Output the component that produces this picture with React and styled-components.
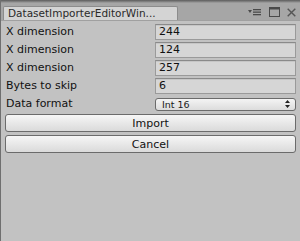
import React from "react";
import styled, { createGlobalStyle } from "styled-components";

const Global = createGlobalStyle`
  html, body {
    margin: 0;
    padding: 0;
    background: #c2c2c2;
  }
`;

const rows = [
  { label: "X dimension", value: "244" },
  { label: "X dimension", value: "124" },
  { label: "X dimension", value: "257" },
  { label: "Bytes to skip", value: "6" },
];

const App = () => (
  <>
    <Global />
    <Window>
      <TitleBar>
        <Tab>DatasetImporterEditorWin...</Tab>
        <Controls>
          <svg width="14" height="8" viewBox="0 0 14 8">
            <path d="M0 2 L4 2 L2 5 Z" fill="#4a4a4a" />
            <rect x="5" y="1" width="8" height="1.3" fill="#4a4a4a" />
            <rect x="5" y="3.5" width="8" height="1.3" fill="#4a4a4a" />
            <rect x="5" y="6" width="8" height="1.3" fill="#4a4a4a" />
          </svg>
          <svg width="11" height="10" viewBox="0 0 11 10">
            <rect x="0.5" y="0.5" width="10" height="9" fill="none" stroke="#4a4a4a" />
            <rect x="0.5" y="0.5" width="10" height="2" fill="#4a4a4a" />
          </svg>
          <svg width="9" height="9" viewBox="0 0 9 9">
            <path d="M0.7 0.7 L8.3 8.3 M8.3 0.7 L0.7 8.3" stroke="#555" strokeWidth="1.4" />
          </svg>
        </Controls>
      </TitleBar>
      <Body>
        <Fields>
          {rows.map((r, i) => (
            <Row key={i}>
              <Label>{r.label}</Label>
              <Field>{r.value}</Field>
            </Row>
          ))}
          <Row>
            <Label>Data format</Label>
            <Popup>
              <span>Int 16</span>
              <svg width="5" height="8" viewBox="0 0 5 8">
                <path d="M0 3 L2.5 0 L5 3 Z M0 5 L2.5 8 L5 5 Z" fill="#222" />
              </svg>
            </Popup>
          </Row>
        </Fields>
        <Buttons>
          <Button>Import</Button>
          <Button>Cancel</Button>
        </Buttons>
      </Body>
    </Window>
  </>
);

export default App;

const Window = styled.div`
  width: 300px;
  height: 241px;
  box-sizing: border-box;
  display: flex;
  flex-direction: column;
  font-family: "DejaVu Sans", "Liberation Sans", sans-serif;
  font-size: 11px;
  color: #111;
  background: #c2c2c2;
  border-left: 1px solid #6f6f6f;
  overflow: hidden;
`;

const TitleBar = styled.div`
  height: 21px;
  display: flex;
  align-items: flex-end;
  justify-content: space-between;
  background: linear-gradient(#5c5c5c 0, #8a8a8a 2px, #a6a6a6 3px, #a6a6a6);
  padding: 0 4px 0 2px;
  box-sizing: border-box;
  border-bottom: 1px solid #a0a0a0;
`;

const Tab = styled.div`
  width: 175px;
  height: 14px;
  box-sizing: border-box;
  background: #d4d4d4;
  border: 1px solid #8c8c8c;
  border-bottom: none;
  border-radius: 2px 2px 0 0;
  padding: 0 0 0 4px;
  font-size: 10.5px;
  line-height: 13px;
  color: #2a2a2a;
  white-space: nowrap;
  overflow: hidden;
`;

const Controls = styled.div`
  align-self: flex-start;
  margin-top: 7px;
  display: flex;
  align-items: center;
  gap: 7px;
`;

const Body = styled.div`
  display: flex;
  flex-direction: column;
  padding: 2px 4px 0 4px;
`;

const Fields = styled.div`
  display: flex;
  flex-direction: column;
  gap: 2px;
`;

const Row = styled.div`
  display: grid;
  grid-template-columns: 150px 1fr;
  align-items: center;
  height: 16px;
`;

const Label = styled.div`
  padding-left: 1px;
  line-height: 17px;
  white-space: nowrap;
`;

const Field = styled.div`
  height: 16px;
  box-sizing: border-box;
  background: #d6d6d6;
  border: 1px solid #9a9a9a;
  border-top-color: #8a8a8a;
  box-shadow: inset 0 1px 0 #c6c6c6;
  padding-left: 3px;
  line-height: 14px;
`;

const Popup = styled.div`
  height: 13px;
  margin-top: 1px;
  box-sizing: border-box;
  display: flex;
  align-items: center;
  justify-content: space-between;
  padding: 0 5px 0 6px;
  border: 1px solid #6b6b6b;
  border-radius: 3px;
  background: linear-gradient(#f4f4f4, #dcdcdc);
  font-size: 9.5px;
  color: #1a1a1a;
`;

const Buttons = styled.div`
  display: flex;
  flex-direction: column;
  gap: 3px;
  margin-top: 3px;
`;

const Button = styled.div`
  height: 18px;
  box-sizing: border-box;
  border: 1px solid #6b6b6b;
  border-radius: 3px;
  background: linear-gradient(#f6f6f6, #dadada);
  display: flex;
  align-items: center;
  justify-content: center;
  font-size: 11px;
  color: #111;
`;
